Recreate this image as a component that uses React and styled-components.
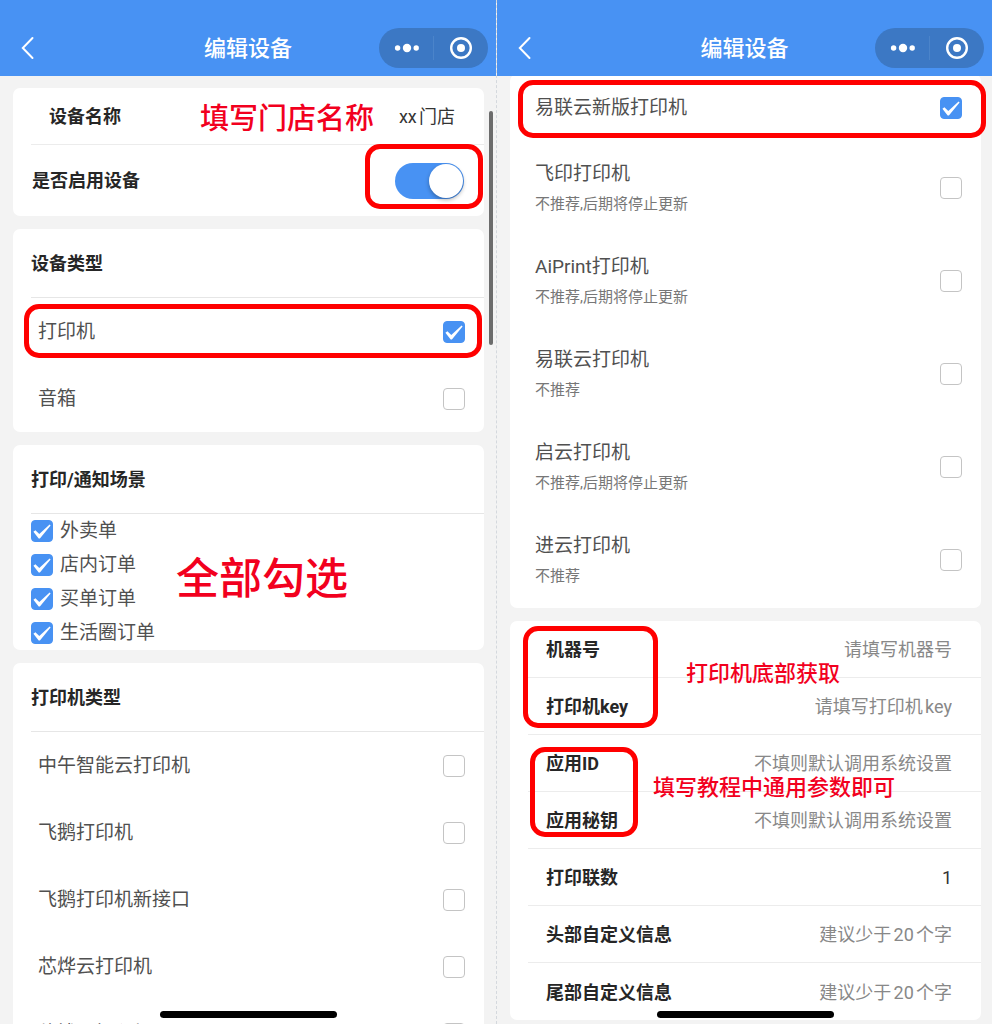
import React from "react";
import styled, { createGlobalStyle } from "styled-components";

const Global = createGlobalStyle`
  *, *::before, *::after { box-sizing: border-box; }
  body {
    margin: 0;
    background: #f3f3f3;
    font-family: Roboto, "Noto Sans CJK SC", sans-serif;
    color: #262626;
  }
  button, input { font-family: inherit; }
`;

const BLUE = "#4892f3";

const Page = styled.div`
  display: grid;
  grid-template-columns: 1fr 1fr;
  height: 100vh;
  overflow: hidden;
`;

const Phone = styled.section`
  position: relative;
  display: flex;
  flex-direction: column;
  min-width: 0;
  min-height: 0;
  border-left: ${(p) => (p.$divided ? "1px dashed #d4d8dd" : "0")};
`;

const NavBar = styled.header`
  position: relative;
  z-index: 1;
  flex: none;
  display: grid;
  grid-template-columns: 1fr auto 1fr;
  align-items: center;
  height: 76px;
  padding: 20px 8px 0;
  background: ${BLUE};
  color: #fff;
`;

const BackButton = styled.button`
  display: flex;
  justify-self: start;
  padding: 4px 12px;
  border: 0;
  background: none;
  color: inherit;
`;

const NavTitle = styled.h1`
  margin: 0;
  padding-top: 2px;
  font-size: 22px;
  line-height: 32px;
  font-weight: 500;
`;

const Capsule = styled.div`
  justify-self: end;
  display: flex;
  align-items: center;
  width: 109px;
  height: 40px;
  border-radius: 20px;
  background: #3c78c4;
`;

const CapsuleButton = styled.button`
  flex: 1;
  display: flex;
  align-items: center;
  justify-content: center;
  height: 24px;
  padding: 0;
  border: 0;
  background: none;
  color: #fff;

  & + & { border-left: 1px solid #4b84ca; }
`;

const Content = styled.main`
  flex: 1;
  min-height: 0;
  display: flex;
  flex-direction: column;
  gap: 13px;
  padding: ${(p) => (p.$scrolled ? "0 11px 0 13px" : "12px 12px 0 13px")};
  overflow: hidden;

  & > * { flex: none; }
`;

const Card = styled.div`
  position: relative;
  border-radius: 7px;
  background: #fff;
`;

const ScrolledCard = styled(Card)`
  margin-top: -2px;
  padding-bottom: 2px;
`;

const CardTitle = styled.h2`
  display: flex;
  align-items: center;
  height: 69px;
  margin: 0 0 0 18px;
  padding-top: 2px;
  border-bottom: 1px solid #e6e6e6;
  font-size: 18px;
  line-height: 28px;
  font-weight: 700;
`;

const FieldRow = styled.div`
  display: flex;
  align-items: center;
  gap: 12px;
  height: 57px;
  margin-left: 18px;
  padding: 2px 29px 0 18px;
  border-bottom: ${(p) => (p.$last ? "0" : "1px solid #ececec")};
`;

const FieldLabel = styled.label`
  flex: none;
  font-size: 18px;
  line-height: 28px;
  font-weight: 700;
`;

const FieldInput = styled.input`
  flex: 1;
  min-width: 0;
  height: 28px;
  padding: 0;
  border: 0;
  outline: 0;
  background: none;
  color: #333;
  font-size: 18px;
  line-height: 28px;
  text-align: right;
  text-autospace: normal;

  &::placeholder { color: #888; opacity: 1; }
`;

const FieldGroup = styled.div`
  position: relative;
`;

const SwitchRow = styled.div`
  position: relative;
  display: flex;
  align-items: center;
  justify-content: space-between;
  height: 71px;
  padding: 0 20px 0 19px;
`;

const Switch = styled.input`
  appearance: none;
  width: 69px;
  height: 36px;
  margin: 0;
  border-radius: 18px;
  background: #d8d8d8;

  &::before {
    content: "";
    display: block;
    width: 34px;
    height: 34px;
    margin: 1px;
    border-radius: 50%;
    background: #fff;
    box-shadow: 0 2px 4px rgba(0, 0, 0, 0.3);
  }
  &:checked { background: ${BLUE}; }
  &:checked::before { margin-left: 34px; }
`;

const OptionRow = styled.label`
  position: relative;
  display: flex;
  align-items: center;
  justify-content: space-between;
  height: ${(p) => (p.$tall ? "93px" : "67px")};
  padding: 0 19px 0 25px;
`;

const OptionText = styled.span`
  display: flex;
  flex-direction: column;
  padding-top: ${(p) => (p.$tall ? "3px" : "1px")};
`;

const OptionName = styled.span`
  font-size: 19px;
  line-height: 30px;
  color: #505050;
`;

const OptionHint = styled.span`
  font-size: 15px;
  line-height: 30px;
  color: #777;
`;

const SceneRow = styled.label`
  display: flex;
  align-items: center;
  gap: 7px;
  height: 34px;
  padding-left: 18px;
`;

const CheckBox = styled.span`
  position: relative;
  flex: none;
  display: block;
  width: 22px;
  height: 22px;

  svg {
    position: absolute;
    inset: 0;
    pointer-events: none;
  }
`;

const CheckInput = styled.input`
  appearance: none;
  display: block;
  width: 22px;
  height: 22px;
  margin: 0;
  border: 1px solid #c4c4c4;
  border-radius: 4px;
  background: #fff;

  &:checked {
    border-color: ${BLUE};
    background: ${BLUE};
  }
`;

const Highlight = styled.span`
  position: absolute;
  z-index: 2;
  inset: ${(p) => p.$inset};
  width: ${(p) => p.$width || "auto"};
  border: 5px solid #ff0000;
  border-radius: 15px;
  pointer-events: none;
`;

const Note = styled.span`
  position: absolute;
  z-index: 2;
  top: ${(p) => p.$top};
  left: ${(p) => p.$left};
  font-size: ${(p) => p.$size};
  line-height: 1;
  font-weight: 500;
  white-space: nowrap;
  color: #f2001e;
  pointer-events: none;
`;

const ScrollThumb = styled.span`
  position: absolute;
  top: 111px;
  right: 3px;
  width: 4px;
  height: 234px;
  border-radius: 2px;
  background: #6c6c6c;
`;

const HomeIndicator = styled.span`
  position: absolute;
  z-index: 3;
  bottom: 6px;
  left: 50%;
  width: 177px;
  height: 7px;
  margin-left: -88px;
  border-radius: 4px;
  background: #000;
`;

function Check({ checked }) {
  return (
    <CheckBox>
      <CheckInput type="checkbox" defaultChecked={checked} />
      {checked && (
        <svg width="22" height="22" viewBox="0 0 22 22" aria-hidden="true">
          <path d="M2.4 11.8 4.4 10.2 8.3 14 18.6 4.6 19.6 5.4 8.9 18.4 7.7 18.4Z" fill="#fff" />
        </svg>
      )}
    </CheckBox>
  );
}

function Option({ name, hint, checked, children }) {
  const tall = Boolean(hint);
  return (
    <OptionRow $tall={tall}>
      <OptionText $tall={tall}>
        <OptionName>{name}</OptionName>
        {hint && <OptionHint>{hint}</OptionHint>}
      </OptionText>
      <Check checked={checked} />
      {children}
    </OptionRow>
  );
}

function Field({ id, label, last, ...input }) {
  return (
    <FieldRow $last={last}>
      <FieldLabel htmlFor={id}>{label}</FieldLabel>
      <FieldInput id={id} type="text" {...input} />
    </FieldRow>
  );
}

function Nav() {
  return (
    <NavBar>
      <BackButton type="button" aria-label="返回">
        <svg width="16" height="24" viewBox="0 0 16 24" fill="none" stroke="currentColor" strokeWidth="2">
          <path d="M12.5 2 2.8 12l9.7 10" strokeLinecap="round" strokeLinejoin="miter" />
        </svg>
      </BackButton>
      <NavTitle>编辑设备</NavTitle>
      <Capsule>
        <CapsuleButton type="button" aria-label="更多">
          <svg width="26" height="10" viewBox="0 0 26 10" fill="currentColor">
            <circle cx="4.6" cy="5" r="2.7" />
            <circle cx="14" cy="5" r="4.2" />
            <circle cx="23.2" cy="5" r="2.7" />
          </svg>
        </CapsuleButton>
        <CapsuleButton type="button" aria-label="关闭">
          <svg width="24" height="24" viewBox="0 0 24 24">
            <circle cx="12" cy="12" r="9.8" fill="none" stroke="currentColor" strokeWidth="2.4" />
            <circle cx="12" cy="12" r="4" fill="currentColor" />
          </svg>
        </CapsuleButton>
      </Capsule>
    </NavBar>
  );
}

const scenes = ["外卖单", "店内订单", "买单订单", "生活圈订单"];
const printers = ["中午智能云打印机", "飞鹅打印机", "飞鹅打印机新接口", "芯烨云打印机", "佳博云打印机"];
const retired = [
  ["飞印打印机", "不推荐,后期将停止更新"],
  ["AiPrint打印机", "不推荐,后期将停止更新"],
  ["易联云打印机", "不推荐"],
  ["启云打印机", "不推荐,后期将停止更新"],
  ["进云打印机", "不推荐"],
];

export default function App() {
  return (
    <>
      <Global />
      <Page>
        <Phone>
          <Nav />
          <Content>
            <Card>
              <Field id="name" label="设备名称" defaultValue="xx门店" />
              <SwitchRow>
                <FieldLabel htmlFor="enabled">是否启用设备</FieldLabel>
                <Switch id="enabled" type="checkbox" role="switch" defaultChecked />
                <Highlight $inset="-1px 1px 7px auto" $width="118px" />
              </SwitchRow>
              <Note $top="17px" $left="187px" $size="29px">填写门店名称</Note>
            </Card>
            <Card>
              <CardTitle>设备类型</CardTitle>
              <Option name="打印机" checked>
                <Highlight $inset="6px 2px 7px 11px" />
              </Option>
              <Option name="音箱" />
            </Card>
            <Card>
              <CardTitle>打印/通知场景</CardTitle>
              {scenes.map((scene) => (
                <SceneRow key={scene}>
                  <Check checked />
                  <OptionName>{scene}</OptionName>
                </SceneRow>
              ))}
              <Note $top="113px" $left="163px" $size="43px">全部勾选</Note>
            </Card>
            <Card>
              <CardTitle>打印机类型</CardTitle>
              {printers.map((name) => (
                <Option key={name} name={name} />
              ))}
            </Card>
          </Content>
          <ScrollThumb />
          <HomeIndicator />
        </Phone>
        <Phone $divided>
          <Nav />
          <Content $scrolled>
            <ScrolledCard>
              <Option name="易联云新版打印机" checked>
                <Highlight $inset="6px -5px 3px 8px" />
              </Option>
              {retired.map(([name, hint]) => (
                <Option key={name} name={name} hint={hint} />
              ))}
            </ScrolledCard>
            <Card>
              <FieldGroup>
                <Field id="machine" label="机器号" placeholder="请填写机器号" />
                <Field id="key" label="打印机key" placeholder="请填写打印机key" />
                <Highlight $inset="5px auto 7px 13px" $width="135px" />
                <Note $top="42px" $left="176px" $size="22px">打印机底部获取</Note>
              </FieldGroup>
              <FieldGroup>
                <Field id="appid" label="应用ID" placeholder="不填则默认调用系统设置" />
                <Field id="secret" label="应用秘钥" placeholder="不填则默认调用系统设置" />
                <Highlight $inset="12px auto 12px 20px" $width="108px" />
                <Note $top="42px" $left="143px" $size="22px">填写教程中通用参数即可</Note>
              </FieldGroup>
              <Field id="copies" label="打印联数" defaultValue="1" />
              <Field id="head" label="头部自定义信息" placeholder="建议少于20个字" />
              <Field id="tail" label="尾部自定义信息" placeholder="建议少于20个字" last />
            </Card>
          </Content>
          <HomeIndicator />
        </Phone>
      </Page>
    </>
  );
}
